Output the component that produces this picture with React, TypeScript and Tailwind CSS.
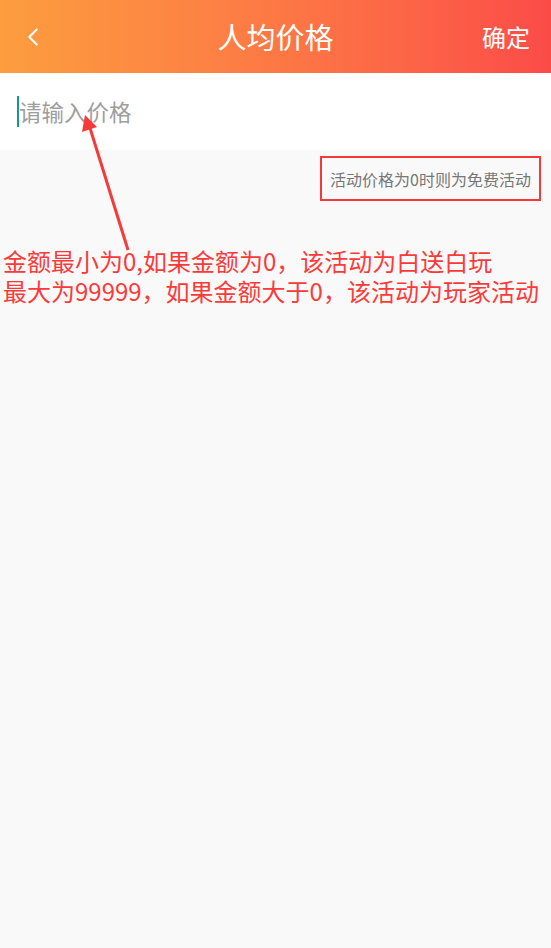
import { ChevronLeft } from "lucide-react";

const cjk = { fontFamily: '"Noto Sans CJK SC", "Noto Sans", sans-serif' };

function Header() {
  return (
    <div className="grid h-[73px] grid-cols-[1fr_auto_1fr] items-center bg-gradient-to-r from-[#fc9d3e] to-[#fb4b48] px-[18px] text-white">
      <ChevronLeft className="h-[30px] w-[30px]" strokeWidth={1.6} />
      <span className="text-[29px] leading-none">人均价格</span>
      <span className="justify-self-end pr-[3px] text-[24px] leading-none">确定</span>
    </div>
  );
}

function Arrow() {
  return (
    <svg className="pointer-events-none absolute left-0 top-0" width="551" height="260">
      <line x1="128" y1="250" x2="90" y2="128" stroke="#f53a3a" strokeWidth="3" />
      <polygon points="85,115 82,132 97,127" fill="#f53a3a" />
    </svg>
  );
}

export default function App() {
  return (
    <div className="relative min-h-[948px] bg-[#f9f9f9]" style={cjk}>
      <Header />
      <div className="flex h-[77px] items-center bg-white pl-[17px]">
        <div className="h-[31px] w-[2px] bg-[#129a8a]" />
        <span className="text-[22.5px] text-[#9e9e9e]">请输入价格</span>
      </div>
      <div className="flex justify-end pr-[10px] pt-[6px]">
        <div className="flex h-[45px] w-[221px] items-center justify-center border-2 border-[#f53939] text-[16px] text-[#777]">
          活动价格为0时则为免费活动
        </div>
      </div>
      <div className="mt-[45px] pl-[3px] text-[24px] leading-[30px] text-[#fc3a3a]">
        <p>金额最小为0,如果金额为0，该活动为白送白玩</p>
        <p>最大为99999，如果金额大于0，该活动为玩家活动</p>
      </div>
      <Arrow />
    </div>
  );
}
